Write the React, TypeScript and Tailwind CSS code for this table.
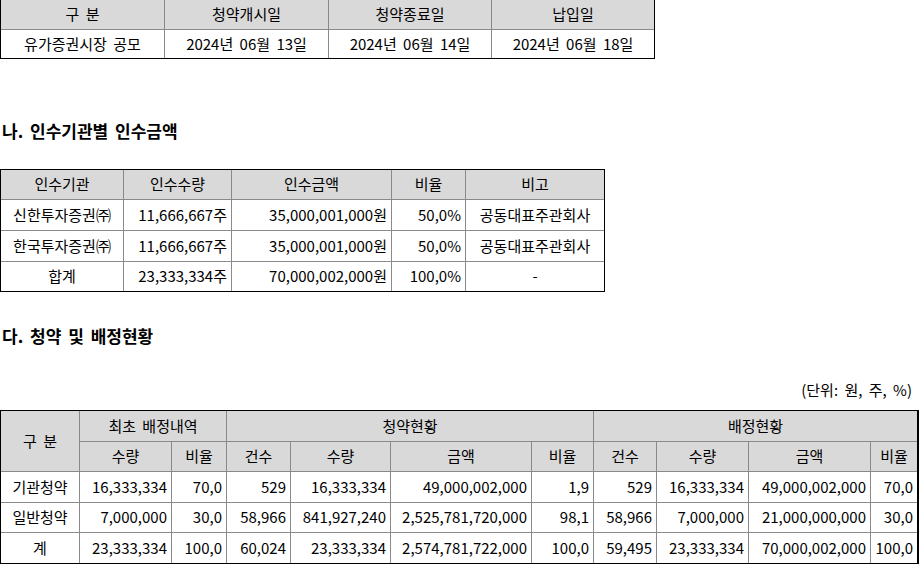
import React from "react";

type CellProps = {
  children?: React.ReactNode;
  right?: boolean;
  header?: boolean;
  noR?: boolean;
  noB?: boolean;
  className?: string;
};

function Cell({ children, right, header, noR, noB, className }: CellProps) {
  const cls = [
    "flex items-center whitespace-nowrap border-[#8a8a8a]",
    right ? "justify-end pr-[4px]" : "justify-center",
    header ? "bg-[#d9d9d9]" : "bg-white",
    noR ? "" : "border-r",
    noB ? "" : "border-b",
    className ?? "",
  ].join(" ");
  return <div className={cls}>{children}</div>;
}

function Table1() {
  const head = ["구 분", "청약개시일", "청약종료일", "납입일"];
  const row = ["유가증권시장 공모", "2024년 06월 13일", "2024년 06월 14일", "2024년 06월 18일"];
  return (
    <div className="grid w-[655px] grid-cols-[164px_164px_163px_162px] grid-rows-[30px_28px] border-x border-b border-black">
      {head.map((h, i) => (
        <Cell key={"h" + i} header noR={i === 3}>
          {h}
        </Cell>
      ))}
      {row.map((c, i) => (
        <Cell key={"r" + i} noR={i === 3} noB>
          {c}
        </Cell>
      ))}
    </div>
  );
}

function Table2() {
  const head = ["인수기관", "인수수량", "인수금액", "비율", "비고"];
  const rows = [
    ["신한투자증권㈜", "11,666,667주", "35,000,001,000원", "50,0%", "공동대표주관회사"],
    ["한국투자증권㈜", "11,666,667주", "35,000,001,000원", "50,0%", "공동대표주관회사"],
    ["합계", "23,333,334주", "70,000,002,000원", "100,0%", "-"],
  ];
  return (
    <div className="grid w-[605px] grid-cols-[123px_108px_160px_74px_138px] grid-rows-[30px_31px_31px_29px] border border-black">
      {head.map((h, i) => (
        <Cell key={"h" + i} header noR={i === 4}>
          {h}
        </Cell>
      ))}
      {rows.map((r, ri) =>
        r.map((c, i) => (
          <Cell
            key={ri + "-" + i}
            right={i >= 1 && i <= 3}
            noR={i === 4}
            noB={ri === 2}
          >
            {c}
          </Cell>
        ))
      )}
    </div>
  );
}

function Table3() {
  const rows = [
    ["기관청약", "16,333,334", "70,0", "529", "16,333,334", "49,000,002,000", "1,9", "529", "16,333,334", "49,000,002,000", "70,0"],
    ["일반청약", "7,000,000", "30,0", "58,966", "841,927,240", "2,525,781,720,000", "98,1", "58,966", "7,000,000", "21,000,000,000", "30,0"],
    ["계", "23,333,334", "100,0", "60,024", "23,333,334", "2,574,781,722,000", "100,0", "59,495", "23,333,334", "70,000,002,000", "100,0"],
  ];
  const sub = ["수량", "비율", "건수", "수량", "금액", "비율", "건수", "수량", "금액", "비율"];
  return (
    <div className="grid w-[919px] grid-cols-[79px_92px_55px_64px_100px_141px_62px_63px_92px_122px_46px] grid-rows-[31px_30px_31px_30px_30px] border-y border-l border-r-2 border-black">
      <Cell header className="row-span-2">
        구 분
      </Cell>
      <Cell header className="col-span-2">
        최초 배정내역
      </Cell>
      <Cell header className="col-span-4">
        청약현황
      </Cell>
      <Cell header noR className="col-span-4">
        배정현황
      </Cell>
      {sub.map((s, i) => (
        <Cell key={"s" + i} header noR={i === 9}>
          {s}
        </Cell>
      ))}
      {rows.map((r, ri) =>
        r.map((c, i) => (
          <Cell key={ri + "-" + i} right={i >= 1} noR={i === 10} noB={ri === 2}>
            {c}
          </Cell>
        ))
      )}
    </div>
  );
}

export default function App() {
  return (
    <div className="w-[919px] h-[564px] overflow-hidden bg-white text-black font-['Noto_Sans_CJK_KR',sans-serif] text-[15px] [word-spacing:3px]">
      <Table1 />
      <h2 className="mt-[60px] h-[24px] pl-[2px] text-[17px] font-bold leading-[24px]">
        나. 인수기관별 인수금액
      </h2>
      <div className="mt-[26px]">
        <Table2 />
      </div>
      <h2 className="mt-[32px] h-[24px] pl-[2px] text-[17px] font-bold leading-[24px]">
        다. 청약 및 배정현황
      </h2>
      <div className="mt-[32px] h-[20px] pr-[7px] text-right leading-[20px]">
        (단위: 원, 주, %)
      </div>
      <div className="mt-[10px]">
        <Table3 />
      </div>
    </div>
  );
}
